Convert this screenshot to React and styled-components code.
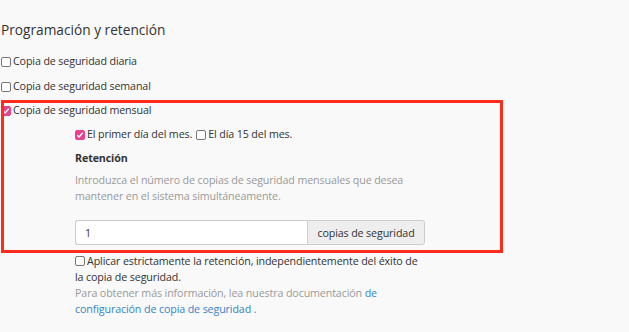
import React from "react";
import styled, { createGlobalStyle } from "styled-components";

const Global = createGlobalStyle`
  html, body {
    margin: 0;
    padding: 0;
    background: #f9f9f9;
  }
  body {
    font-family: "Open Sans", "Liberation Sans", sans-serif;
    color: #333;
    font-size: 10.7px;
    letter-spacing: -0.12px;
    overflow: hidden;
  }
`;

const Page = styled.div`
  position: relative;
  width: 629px;
  height: 332px;
  padding-top: 20px;
  box-sizing: border-box;
`;

const Title = styled.h2`
  margin: 0 0 13px 1px;
  font-size: 13.7px;
  font-weight: 400;
  letter-spacing: 0;
  color: #333;
  line-height: 20px;
`;

const Row = styled.label`
  display: flex;
  align-items: flex-start;
  line-height: 16px;
  margin-bottom: ${(p) => p.$gap ?? 8.5}px;
`;

const WrapRow = styled.label`
  display: block;
  line-height: 16px;
  margin-left: 1px;

  & > span:first-child {
    display: inline-flex;
    vertical-align: -1px;
    margin: 0 2px 0 0;
  }
`;

const Box = styled.span`
  flex: none;
  width: 8px;
  height: 8px;
  margin: 4px 2px 0 1px;
  border: 1px solid ${(p) => (p.$checked ? "#e8428c" : "#777")};
  border-radius: 2px;
  background: ${(p) => (p.$checked ? "#e8428c" : "#fff")};
  display: flex;
  align-items: center;
  justify-content: center;
`;

const Check = ({ checked }) => (
  <Box $checked={checked}>
    {checked && (
      <svg width="8" height="8" viewBox="0 0 8 8">
        <path d="M1.3 4.2 L3.1 6 L6.7 1.8" stroke="#fff" strokeWidth="1.4" fill="none" />
      </svg>
    )}
  </Box>
);

const Nested = styled.div`
  padding-left: 74px;
  width: 351px;
`;

const Inline = styled.div`
  display: flex;
  gap: 3px;
  line-height: 16px;
  margin: 8px 0 8px;
`;

const Option = styled.span`
  display: flex;
  align-items: flex-start;
`;

const Heading = styled.div`
  font-weight: 700;
  line-height: 16px;
  margin: 0 0 6px 1px;
`;

const Help = styled.p`
  margin: 0 0 0 1px;
  color: #999;
  line-height: 16px;
`;

const Group = styled.div`
  display: flex;
  width: 350px;
  height: 25px;
  margin: 16px 0 8px 1px;
  box-sizing: border-box;
`;

const Field = styled.div`
  flex: 1;
  display: flex;
  align-items: center;
  padding-left: 9px;
  background: #fff;
  border: 1px solid #ccc;
  border-right: none;
  border-radius: 3px 0 0 3px;
`;

const Addon = styled.div`
  flex: none;
  width: 118px;
  display: flex;
  align-items: center;
  justify-content: center;
  box-sizing: border-box;
  background: #eee;
  border: 1px solid #ccc;
  border-radius: 0 3px 3px 0;
`;

const Link = styled.a`
  color: #3683c6;
  text-decoration: none;
`;

const Highlight = styled.div`
  position: absolute;
  left: 1px;
  top: 100px;
  width: 502px;
  height: 153px;
  border: 3px solid #ff2b1c;
  box-sizing: border-box;
  pointer-events: none;
`;

export default function App() {
  return (
    <>
      <Global />
      <Page>
        <Title>Programación y retención</Title>
        <Row>
          <Check />
          Copia de seguridad diaria
        </Row>
        <Row>
          <Check />
          Copia de seguridad semanal
        </Row>
        <Row $gap={0}>
          <Check checked />
          Copia de seguridad mensual
        </Row>
        <Nested>
          <Inline>
            <Option>
              <Check checked />
              El primer día del mes.
            </Option>
            <Option>
              <Check />
              El día 15 del mes.
            </Option>
          </Inline>
          <Heading>Retención</Heading>
          <Help>
            Introduzca el número de copias de seguridad mensuales que desea
            mantener en el sistema simultáneamente.
          </Help>
          <Group>
            <Field>1</Field>
            <Addon>copias de seguridad</Addon>
          </Group>
          <WrapRow>
            <Check />
            Aplicar estrictamente la retención, independientemente del éxito de
            la copia de seguridad.
          </WrapRow>
          <Help>
            Para obtener más información, lea nuestra documentación{" "}
            <Link href="#">de configuración de copia de seguridad .</Link>
          </Help>
        </Nested>
        <Highlight />
      </Page>
    </>
  );
}
